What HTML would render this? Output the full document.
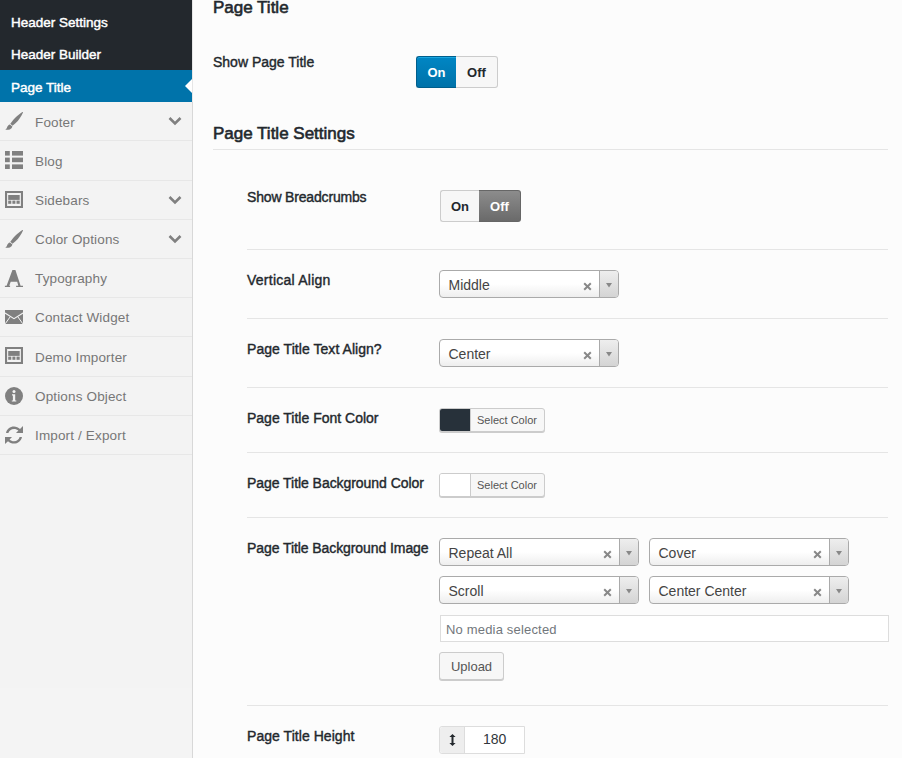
<!DOCTYPE html><html><head><meta charset="utf-8"><style>
*{margin:0;padding:0;box-sizing:content-box}
html,body{width:902px;height:758px;overflow:hidden;background:#fcfcfc;position:relative}
.t{position:absolute;white-space:nowrap;line-height:20px;font-family:'Liberation Sans',sans-serif;}
.sw{position:absolute;font-family:'Liberation Sans',sans-serif;font-size:13px;font-weight:700;line-height:32px;text-align:center}
.s2{position:absolute;border:1px solid #aaa;border-radius:4px;background:linear-gradient(#fff 50%,#eee);overflow:hidden}
.s2t{position:absolute;left:8.5px;top:4px;line-height:20px;font-size:14px;color:#444;font-family:'Liberation Sans',sans-serif;white-space:nowrap}
.s2a{position:absolute;right:0;top:0;width:18px;height:26px;border-left:1px solid #aaa;background:linear-gradient(#eee,#d4d4d4);}
.cb{position:absolute;width:104px;height:22px;border:1px solid #ccc;border-radius:3px;background:#f7f7f7;box-shadow:0 1px 0 #ccc;overflow:hidden}
.sw2{position:absolute;left:0;top:0;width:30px;height:22px;border-right:1px solid #ccc}
.cbt{position:absolute;left:37px;top:3px;line-height:16px;font-size:11px;color:#555;font-family:'Liberation Sans',sans-serif;white-space:nowrap}
.btn{position:absolute;border:1px solid #ccc;border-radius:3px;background:#f7f7f7;box-shadow:0 1px 0 #ccc;font-family:'Liberation Sans',sans-serif;font-size:13px;color:#555;line-height:28px;text-align:center}
</style></head><body><div style="position:absolute;left:0px;top:0px;width:192px;height:758px;background:#f3f3f3;"></div>
<div style="position:absolute;left:0px;top:688px;width:192px;height:70px;background:#f4f4f4;"></div>
<div style="position:absolute;left:192px;top:0px;width:1px;height:758px;background:#d8d8d8;"></div>
<div style="position:absolute;left:0px;top:0px;width:192px;height:70px;background:#23282d;"></div>
<div style="position:absolute;left:0px;top:70px;width:192px;height:32px;background:#0073aa;"></div>
<div style="position:absolute;left:192px;top:0px;width:1px;height:102px;background:#e6e6e6;"></div>
<svg style="position:absolute;left:184px;top:78px" width="9" height="16"><path d="M8 1 L1 8 L8 15 Z" fill="#fff"/></svg>
<div class="t" style="left:11px;top:12.5px;font-size:13.5px;font-weight:400;color:#fff;letter-spacing:0px;-webkit-text-stroke:0.45px #fff;">Header Settings</div>
<div class="t" style="left:11px;top:44.5px;font-size:13.5px;font-weight:400;color:#fff;letter-spacing:0px;-webkit-text-stroke:0.45px #fff;">Header Builder</div>
<div class="t" style="left:11px;top:77.5px;font-size:13.5px;font-weight:400;color:#fff;letter-spacing:0px;-webkit-text-stroke:0.45px #fff;">Page Title</div>
<div style="position:absolute;left:0px;top:140px;width:192px;height:1px;background:#e7e7e7;"></div>
<svg style="position:absolute;left:4px;top:111px" width="20" height="20" viewBox="0 0 20 20" fill="#808080"><path d="M18.4 0.9 C19 0.9 19.2 1.3 19 1.6 C17.5 5 15 9.5 11.2 12.5 L8.5 14.8 L6.3 12.8 C7.6 11 9 9 11 6.9 C13.5 4.5 16 2.3 18.4 0.9 Z"/><path d="M5.9 13.4 L8.4 15.6 C8.1 16.6 7.3 18 5.9 18.4 C4.5 18.8 2.6 18.8 1.1 18.7 C2.4 18.1 2.9 17.1 3.2 16 C3.6 14.6 4.6 13.7 5.9 13.4 Z"/></svg>
<div class="t" style="left:35px;top:113px;font-size:13.5px;font-weight:400;color:#777;letter-spacing:0.15px;">Footer</div>
<svg style="position:absolute;left:168px;top:116px" width="14" height="10" viewBox="0 0 14 10"><path d="M1.5 2 L7 7.5 L12.5 2" stroke="#808080" stroke-width="2.6" fill="none"/></svg>
<div style="position:absolute;left:0px;top:180px;width:192px;height:1px;background:#e7e7e7;"></div>
<svg style="position:absolute;left:5px;top:151px" width="18" height="18" viewBox="0 0 18 18" fill="#808080"><rect x="0" y="0" width="4.8" height="4.6"/><rect x="7" y="0" width="11" height="4.6"/><rect x="0" y="6.6" width="4.8" height="4.6"/><rect x="7" y="6.6" width="11" height="4.6"/><rect x="0" y="13.4" width="4.8" height="4.6"/><rect x="7" y="13.4" width="11" height="4.6"/></svg>
<div class="t" style="left:35px;top:152px;font-size:13.5px;font-weight:400;color:#777;letter-spacing:0.15px;">Blog</div>
<div style="position:absolute;left:0px;top:219px;width:192px;height:1px;background:#e7e7e7;"></div>
<svg style="position:absolute;left:5px;top:191px" width="18" height="17" viewBox="0 0 18 17" fill="#808080"><path d="M0 0 H18 V17 H0 Z M2.1 2.1 V14.9 H15.9 V2.1 Z" fill-rule="evenodd"/><rect x="3.2" y="4" width="11.5" height="4.9"/><rect x="3.2" y="9.6" width="3.1" height="3.2"/><rect x="7.4" y="9.6" width="3" height="3.2"/><rect x="11.5" y="9.6" width="3.2" height="3.2"/></svg>
<div class="t" style="left:35px;top:191px;font-size:13.5px;font-weight:400;color:#777;letter-spacing:0.15px;">Sidebars</div>
<svg style="position:absolute;left:168px;top:195px" width="14" height="10" viewBox="0 0 14 10"><path d="M1.5 2 L7 7.5 L12.5 2" stroke="#808080" stroke-width="2.6" fill="none"/></svg>
<div style="position:absolute;left:0px;top:258px;width:192px;height:1px;background:#e7e7e7;"></div>
<svg style="position:absolute;left:4px;top:229px" width="20" height="20" viewBox="0 0 20 20" fill="#808080"><path d="M18.4 0.9 C19 0.9 19.2 1.3 19 1.6 C17.5 5 15 9.5 11.2 12.5 L8.5 14.8 L6.3 12.8 C7.6 11 9 9 11 6.9 C13.5 4.5 16 2.3 18.4 0.9 Z"/><path d="M5.9 13.4 L8.4 15.6 C8.1 16.6 7.3 18 5.9 18.4 C4.5 18.8 2.6 18.8 1.1 18.7 C2.4 18.1 2.9 17.1 3.2 16 C3.6 14.6 4.6 13.7 5.9 13.4 Z"/></svg>
<div class="t" style="left:35px;top:230px;font-size:13.5px;font-weight:400;color:#777;letter-spacing:0.15px;">Color Options</div>
<svg style="position:absolute;left:168px;top:234px" width="14" height="10" viewBox="0 0 14 10"><path d="M1.5 2 L7 7.5 L12.5 2" stroke="#808080" stroke-width="2.6" fill="none"/></svg>
<div style="position:absolute;left:0px;top:297px;width:192px;height:1px;background:#e7e7e7;"></div>
<svg style="position:absolute;left:0px;top:259px" width="26" height="30" viewBox="0 0 26 30" fill="#808080"><path d="M12.4 11 H15.4 L20.6 26.8 H23 V28 H16.1 V26.8 H18.3 L17.2 22.7 H10.7 L9.3 26.8 H10.1 V28 H4.9 V26.8 H6.6 Z"/></svg>
<div class="t" style="left:35px;top:269px;font-size:13.5px;font-weight:400;color:#777;letter-spacing:0.15px;">Typography</div>
<div style="position:absolute;left:0px;top:336px;width:192px;height:1px;background:#e7e7e7;"></div>
<svg style="position:absolute;left:5px;top:310px" width="18" height="14" viewBox="0 0 18 14"><rect x="0" y="0" width="18" height="14" fill="#808080"/><path d="M0 3 L9 8.6 L18 3" stroke="#f3f3f3" stroke-width="1.1" fill="none"/><path d="M0.2 13.8 L5.3 6.6 M17.8 13.8 L12.7 6.6" stroke="#f3f3f3" stroke-width="1" fill="none"/></svg>
<div class="t" style="left:35px;top:308px;font-size:13.5px;font-weight:400;color:#777;letter-spacing:0.15px;">Contact Widget</div>
<div style="position:absolute;left:0px;top:376px;width:192px;height:1px;background:#e7e7e7;"></div>
<svg style="position:absolute;left:5px;top:347px" width="18" height="17" viewBox="0 0 18 17" fill="#808080"><path d="M0 0 H18 V17 H0 Z M2.1 2.1 V14.9 H15.9 V2.1 Z" fill-rule="evenodd"/><rect x="3.2" y="4" width="11.5" height="4.9"/><rect x="3.2" y="9.6" width="3.1" height="3.2"/><rect x="7.4" y="9.6" width="3" height="3.2"/><rect x="11.5" y="9.6" width="3.2" height="3.2"/></svg>
<div class="t" style="left:35px;top:348px;font-size:13.5px;font-weight:400;color:#777;letter-spacing:0.15px;">Demo Importer</div>
<div style="position:absolute;left:0px;top:415px;width:192px;height:1px;background:#e7e7e7;"></div>
<svg style="position:absolute;left:5px;top:387px" width="18" height="18" viewBox="0 0 18 18"><circle cx="9" cy="9" r="9" fill="#808080"/><circle cx="9" cy="4.6" r="1.5" fill="#f3f3f3"/><path d="M7 7.3 H10.2 V13.5 H11.3 V14.6 H6.8 V13.5 H7.9 V8.4 H7 Z" fill="#f3f3f3"/></svg>
<div class="t" style="left:35px;top:387px;font-size:13.5px;font-weight:400;color:#777;letter-spacing:0.15px;">Options Object</div>
<div style="position:absolute;left:0px;top:454px;width:192px;height:1px;background:#e7e7e7;"></div>
<svg style="position:absolute;left:5px;top:426px" width="18" height="18" viewBox="0 0 18 18" fill="#808080"><path d="M1 7 C1.8 3 5 0.5 9 0.5 C11.3 0.5 13.4 1.4 15 2.9 L18 0 V7 H11 L13.4 4.6 C12.3 3.5 10.7 2.9 9 2.9 C6.2 2.9 4 4.6 3.4 7 Z"/><path d="M17 11 C16.2 15 13 17.6 9 17.6 C6.7 17.6 4.6 16.7 3 15.2 L0 18 V11 H7 L4.6 13.4 C5.7 14.5 7.3 15.2 9 15.2 C11.8 15.2 14 13.4 14.6 11 Z"/></svg>
<div class="t" style="left:35px;top:426px;font-size:13.5px;font-weight:400;color:#777;letter-spacing:0.15px;">Import / Export</div>
<div style="position:absolute;left:193px;top:0px;width:709px;height:758px;background:#fcfcfc;"></div>
<div class="t" style="left:213px;top:-2px;font-size:17px;font-weight:400;color:#23282d;-webkit-text-stroke:0.6px #23282d;">Page Title</div>
<div class="t" style="left:213px;top:52px;font-size:14px;font-weight:400;color:#23282d;-webkit-text-stroke:0.4px #23282d;">Show Page Title</div>
<div class="t" style="left:213px;top:124px;font-size:17px;font-weight:400;color:#23282d;-webkit-text-stroke:0.6px #23282d;">Page Title Settings</div>
<div style="position:absolute;left:213px;top:149px;width:675px;height:1px;background:#e5e5e5;"></div>
<div style="position:absolute;left:247px;top:249px;width:641px;height:1px;background:#e5e5e5;"></div>
<div style="position:absolute;left:247px;top:318px;width:641px;height:1px;background:#e5e5e5;"></div>
<div style="position:absolute;left:247px;top:387px;width:641px;height:1px;background:#e5e5e5;"></div>
<div style="position:absolute;left:247px;top:452px;width:641px;height:1px;background:#e5e5e5;"></div>
<div style="position:absolute;left:247px;top:517px;width:641px;height:1px;background:#e5e5e5;"></div>
<div style="position:absolute;left:247px;top:705px;width:641px;height:1px;background:#e5e5e5;"></div>
<div class="t" style="left:247px;top:187px;font-size:14px;font-weight:400;color:#23282d;-webkit-text-stroke:0.4px #23282d;letter-spacing:-0.17px;">Show Breadcrumbs</div>
<div class="t" style="left:247px;top:270px;font-size:14px;font-weight:400;color:#23282d;-webkit-text-stroke:0.4px #23282d;letter-spacing:0.25px;">Vertical Align</div>
<div class="t" style="left:247px;top:339px;font-size:14px;font-weight:400;color:#23282d;-webkit-text-stroke:0.4px #23282d;letter-spacing:0.05px;">Page Title Text Align?</div>
<div class="t" style="left:247px;top:408px;font-size:14px;font-weight:400;color:#23282d;-webkit-text-stroke:0.4px #23282d;letter-spacing:0px;">Page Title Font Color</div>
<div class="t" style="left:247px;top:473px;font-size:14px;font-weight:400;color:#23282d;-webkit-text-stroke:0.4px #23282d;letter-spacing:-0.05px;">Page Title Background Color</div>
<div class="t" style="left:247px;top:538px;font-size:14px;font-weight:400;color:#23282d;-webkit-text-stroke:0.4px #23282d;letter-spacing:-0.08px;">Page Title Background Image</div>
<div class="t" style="left:247px;top:726px;font-size:14px;font-weight:400;color:#23282d;-webkit-text-stroke:0.4px #23282d;letter-spacing:0.05px;">Page Title Height</div>
<div class="sw" style="left:416px;top:56px;width:38px;height:30px;background:linear-gradient(#0086c4,#0072a9);border:1px solid #005e8c;box-shadow:inset 0 1px 0 #1aa6e0;color:#fff;border-radius:3px 0 0 3px;border-right:0;width:39px;">On</div>
<div class="sw" style="left:456px;top:56px;width:40px;height:30px;background:#f7f7f7;border:1px solid #ccc;color:#23282d;border-radius:0 3px 3px 0;border-left:0;width:41px;">Off</div>
<div class="sw" style="left:440px;top:190px;width:37px;height:30px;background:#f7f7f7;border:1px solid #ccc;color:#23282d;border-radius:3px 0 0 3px;border-right:0;width:38px;">On</div>
<div class="sw" style="left:479px;top:190px;width:40px;height:30px;background:linear-gradient(#8c8c8c,#6a6a6a);border:1px solid #666;color:#fff;border-radius:0 3px 3px 0;border-left:0;width:41px;">Off</div>
<div class="s2" style="left:439px;top:270px;width:178px;height:26px;"><span class="s2t">Middle</span><svg style="position:absolute;left:142.5px;top:10.5px" width="9" height="9" viewBox="0 0 9 9"><path d="M1.2 1.2 L7.8 7.8 M7.8 1.2 L1.2 7.8" stroke="#888" stroke-width="2"/></svg><div class="s2a"><svg style="position:absolute;left:5.5px;top:11.5px" width="6" height="5" viewBox="0 0 6 5"><path d="M0 0 H6 L3 4.6 Z" fill="#888"/></svg></div></div>
<div class="s2" style="left:439px;top:339px;width:178px;height:26px;"><span class="s2t">Center</span><svg style="position:absolute;left:142.5px;top:10.5px" width="9" height="9" viewBox="0 0 9 9"><path d="M1.2 1.2 L7.8 7.8 M7.8 1.2 L1.2 7.8" stroke="#888" stroke-width="2"/></svg><div class="s2a"><svg style="position:absolute;left:5.5px;top:11.5px" width="6" height="5" viewBox="0 0 6 5"><path d="M0 0 H6 L3 4.6 Z" fill="#888"/></svg></div></div>
<div class="s2" style="left:439px;top:538px;width:198px;height:26px;"><span class="s2t">Repeat All</span><svg style="position:absolute;left:162.5px;top:10.5px" width="9" height="9" viewBox="0 0 9 9"><path d="M1.2 1.2 L7.8 7.8 M7.8 1.2 L1.2 7.8" stroke="#888" stroke-width="2"/></svg><div class="s2a"><svg style="position:absolute;left:5.5px;top:11.5px" width="6" height="5" viewBox="0 0 6 5"><path d="M0 0 H6 L3 4.6 Z" fill="#888"/></svg></div></div>
<div class="s2" style="left:649px;top:538px;width:198px;height:26px;"><span class="s2t">Cover</span><svg style="position:absolute;left:162.5px;top:10.5px" width="9" height="9" viewBox="0 0 9 9"><path d="M1.2 1.2 L7.8 7.8 M7.8 1.2 L1.2 7.8" stroke="#888" stroke-width="2"/></svg><div class="s2a"><svg style="position:absolute;left:5.5px;top:11.5px" width="6" height="5" viewBox="0 0 6 5"><path d="M0 0 H6 L3 4.6 Z" fill="#888"/></svg></div></div>
<div class="s2" style="left:439px;top:576px;width:198px;height:26px;"><span class="s2t">Scroll</span><svg style="position:absolute;left:162.5px;top:10.5px" width="9" height="9" viewBox="0 0 9 9"><path d="M1.2 1.2 L7.8 7.8 M7.8 1.2 L1.2 7.8" stroke="#888" stroke-width="2"/></svg><div class="s2a"><svg style="position:absolute;left:5.5px;top:11.5px" width="6" height="5" viewBox="0 0 6 5"><path d="M0 0 H6 L3 4.6 Z" fill="#888"/></svg></div></div>
<div class="s2" style="left:649px;top:576px;width:198px;height:26px;"><span class="s2t">Center Center</span><svg style="position:absolute;left:162.5px;top:10.5px" width="9" height="9" viewBox="0 0 9 9"><path d="M1.2 1.2 L7.8 7.8 M7.8 1.2 L1.2 7.8" stroke="#888" stroke-width="2"/></svg><div class="s2a"><svg style="position:absolute;left:5.5px;top:11.5px" width="6" height="5" viewBox="0 0 6 5"><path d="M0 0 H6 L3 4.6 Z" fill="#888"/></svg></div></div>
<div class="cb" style="left:439px;top:408px;"><div class="sw2" style="background:#27313a"></div><div class="cbt">Select Color</div></div>
<div class="cb" style="left:439px;top:473px;"><div class="sw2" style="background:#fff"></div><div class="cbt">Select Color</div></div>
<div style="position:absolute;left:440px;top:615px;width:447px;height:25px;border:1px solid #ddd;background:#fff;"></div>
<div class="t" style="left:446px;top:620px;font-size:13px;font-weight:400;color:#72777c;letter-spacing:0.18px">No media selected</div>
<div class="btn" style="left:439px;top:652px;width:63px;height:26px;">Upload</div>
<div style="position:absolute;left:439px;top:726px;width:84px;height:26px;border:1px solid #ddd;border-radius:3px 0 0 3px;background:#fff;"></div>
<div style="position:absolute;left:440px;top:727px;width:24px;height:26px;background:#eee;border-right:1px solid #ddd;border-radius:3px 0 0 3px;"></div>
<svg style="position:absolute;left:449px;top:734px" width="7" height="12" viewBox="0 0 7 12" fill="#23282d"><path d="M3.5 0 L6.6 3 H4.5 V9 H6.6 L3.5 12 L0.4 9 H2.5 V3 H0.4 Z"/></svg>
<div class="t" style="left:483px;top:729px;font-size:14px;font-weight:400;color:#32373c;">180</div></body></html>
